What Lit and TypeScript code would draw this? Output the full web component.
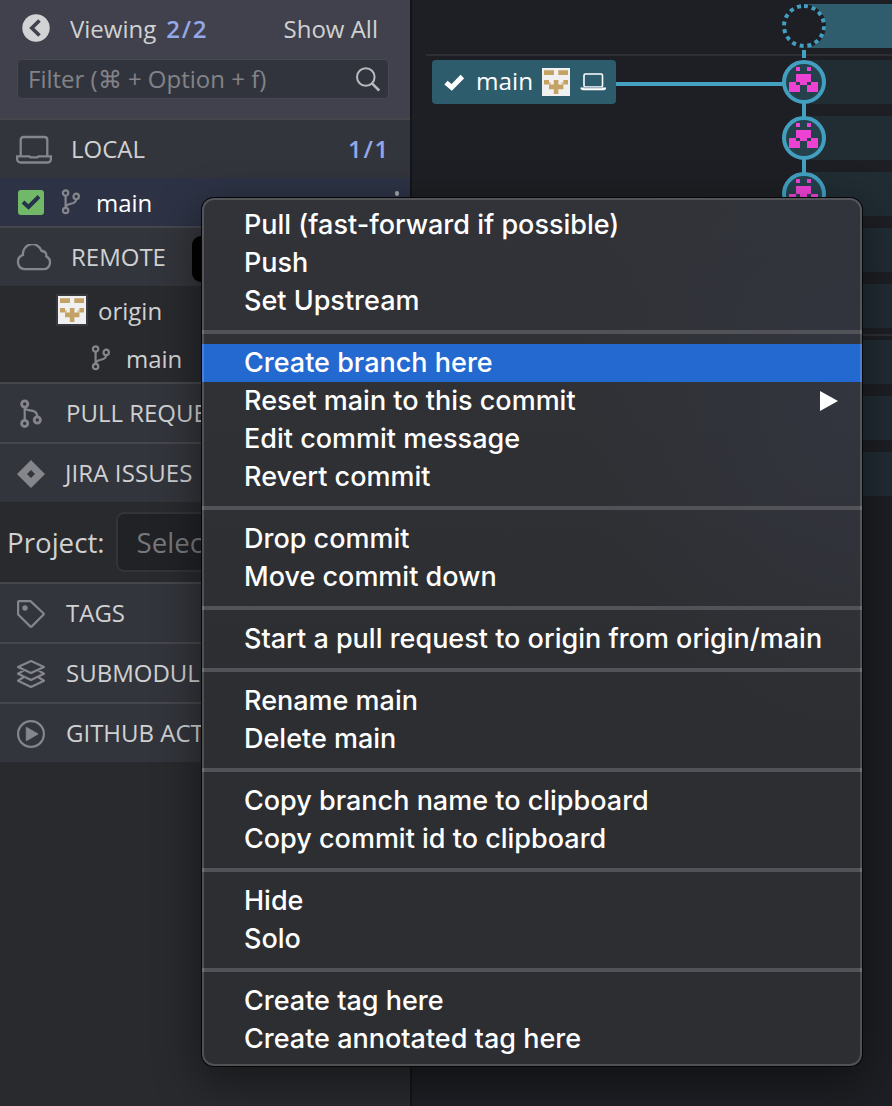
import { LitElement, html, css, svg } from "lit";
import { customElement } from "lit/decorators.js";
import { classMap } from "lit/directives/class-map.js";

const laptop = html`<svg width="36" height="30" viewBox="0 0 36 30" fill="none" stroke="currentColor" stroke-width="2.3">
  <path d="M4.7 21V5Q4.7 2 7.7 2H28.3Q31.3 2 31.3 5V21M1.1 21.4H13.5L14.5 22.4H21.5L22.5 21.4H34.9V23.5Q34.9 27.5 31 27.5H5Q1.1 27.5 1.1 23.5Z"/></svg>`;
const cloud = html`<svg width="36" height="28" viewBox="0 0 36 28" fill="none" stroke="currentColor" stroke-width="2.3">
  <path d="M8 25.2H28.3A6.8 6.8 0 0 0 30.2 12.4A4.7 4.7 0 0 0 25.4 6.6A9.5 9.5 0 0 0 7 10.9A7.4 7.4 0 0 0 8 25.2ZM25 7.2Q27.5 7 29 8.6"/></svg>`;
const branch = html`<svg width="20" height="26" viewBox="0 0 20 26" fill="none" stroke="currentColor" stroke-width="2.2">
  <circle cx="4.6" cy="4" r="2.7"/><circle cx="4.6" cy="21.5" r="2.7"/><circle cx="15.2" cy="7.4" r="2.7"/>
  <path d="M4.6 6.8V18.7M15.2 10.2C15 17 5 12.5 4.6 18.7"/></svg>`;
const pull = html`<svg width="28" height="30" viewBox="0 0 28 30" fill="none" stroke="currentColor" stroke-width="2.2">
  <circle cx="7.7" cy="5" r="3.1" stroke-width="2.8"/><circle cx="7.7" cy="24.4" r="3.1" stroke-width="2.8"/><circle cx="20.3" cy="21" r="3.1" stroke-width="2.8"/>
  <path d="M7.7 8V21.3M8 9C9 13.5 20.3 8.5 20.3 17.9"/></svg>`;
const jira = html`<svg width="28" height="28" viewBox="0 0 28 28" fill="currentColor">
  <path fill-rule="evenodd" d="M14 0L28 14L14 28L0 14ZM14 10L10 14L14 18L18 14Z"/></svg>`;
const tag = html`<svg width="28" height="28" viewBox="0 0 28 28" fill="none" stroke="currentColor" stroke-width="2.2" stroke-linejoin="round">
  <path d="M1.1 2Q1.1 1.1 2 1.1H13.5L26.4 13.2Q27.2 14 26.4 14.8L14.8 26.4Q14 27.2 13.2 26.4L1.1 14.5Z"/><circle cx="8" cy="8" r="2.7" fill="currentColor" stroke="none"/></svg>`;
const layers = html`<svg width="28" height="28" viewBox="0 0 28 28" fill="none" stroke="currentColor" stroke-width="2.2" stroke-linejoin="round">
  <path d="M14 1.1L27 7L14 13L1 7ZM6.5 10.5L1 13.7L14 20L27 13.7L21.5 10.5M6.5 17.2L1 20.7L14 27L27 20.7L21.5 17.2"/></svg>`;
const play = html`<svg width="28" height="28" viewBox="0 0 28 28"><circle cx="14" cy="14" r="12.9" fill="none" stroke="currentColor" stroke-width="2.2"/><path d="M9.3 7.3V20.7L21 14Z" fill="currentColor" stroke="currentColor" stroke-width="1" stroke-linejoin="round"/></svg>`;
const face = html`<svg width="28" height="28" viewBox="0 0 28 28"><path fill="#f0f0f0" d="M0 0H28V28H0Z"/>
  <path fill="#c4a164" d="M2 2.3H12V7H2ZM16.3 2.3H26V7H16.3ZM2 12H7V16.5H2ZM21.4 12H26V16.5H21.4ZM11.8 12H16.4V16.5H21.4V21.2H16.4V26H11.8V21.2H7V16.5H11.8Z"/><path fill="#c4a164" d="M7 14.3H9V16.6H7ZM19.4 14.3H21.4V16.6H19.4Z" opacity=".6"/></svg>`;

const commit = (y: number) => svg`<g transform="translate(804 ${y})">
  <circle r="20" fill="#25414c" stroke="#429fc0" stroke-width="4"/>
  <path fill="#ee42d4" shape-rendering="crispEdges" d="M-8-15H-4V-11H-8ZM3-15H7V-11H3ZM-8-8H7V0H14V10H3V3H-4V10H-15V0H-8Z"/>
  <path fill="#25414c" shape-rendering="crispEdges" d="M-8 0H-4V3H-8ZM3 0H7V3H3Z"/></g>`;

type Item = { label: string; active?: boolean; submenu?: boolean };
const groups: Item[][] = [
  [{ label: "Pull (fast-forward if possible)" }, { label: "Push" }, { label: "Set Upstream" }],
  [{ label: "Create branch here", active: true }, { label: "Reset main to this commit", submenu: true }, { label: "Edit commit message" }, { label: "Revert commit" }],
  [{ label: "Drop commit" }, { label: "Move commit down" }],
  [{ label: "Start a pull request to origin from origin/main" }],
  [{ label: "Rename main" }, { label: "Delete main" }],
  [{ label: "Copy branch name to clipboard" }, { label: "Copy commit id to clipboard" }],
  [{ label: "Hide" }, { label: "Solo" }],
  [{ label: "Create tag here" }, { label: "Create annotated tag here" }],
];

@customElement("context-menu")
export class ContextMenu extends LitElement {
  static styles = css`
    :host { display: block; box-sizing: border-box; width: 660px; height: 868px; padding: 8px 0; border-radius: 12px; position: relative;
      background: radial-gradient(ellipse 280px 360px at 100% 22%, #33353f, #33353f00), linear-gradient(#313338, #2d2e31 55%, #2d2e31);
      box-shadow: 0 0 0 1px #060608, 0 14px 44px 4px rgba(0,0,0,.42);
      font: 500 27px/37px Inter, "Liberation Sans", sans-serif; color: #fff; overflow: hidden; }
    :host::after { content: ""; position: absolute; inset: 0; border: 2px solid rgba(255,255,255,.17); border-radius: 12px; pointer-events: none; }
    .item { display: flex; align-items: center; justify-content: space-between; height: 38px; padding: 0 24px 0 42px; box-sizing: border-box; white-space: nowrap; }
    .text { height: 38px; }
    .active { background: #2469d0; }
    .separator { height: 4px; margin: 10px 0; background: #525358; }
  `;
  render() {
    return html`${groups.map((g, i) => html`${i ? html`<div class="separator"></div>` : ""}
      ${g.map((it) => html`<div class=${classMap({ item: true, active: !!it.active })}><span class="text">${it.label}</span>
        ${it.submenu ? html`<svg width="18" height="20"><path d="M0 0L18 10L0 20Z" fill="#fff"/></svg>` : ""}</div>`)}`)}`;
  }
}

@customElement("commit-graph")
export class CommitGraph extends LitElement {
  static styles = css`
    :host { display: block; position: relative; background: #1e1f24; overflow: hidden; }
    .canvas { display: block; margin-left: -412px; }
    .ref { position: absolute; left: 20px; top: 60px; width: 184px; height: 44px; box-sizing: border-box; display: flex; align-items: center;
      padding: 0 9px 0 12px; background: #2d5d6d; border-radius: 4px; color: #fff; font: 24.3px/42px "Open Sans", "Noto Sans", sans-serif; }
    .check { margin-right: 12px; }
    .name { width: 66px; height: 44px; }
    .machine { margin-left: 10px; }
  `;
  render() {
    return html`<svg class="canvas" width="892" height="1106">
      <path fill="#305d6e" d="M804 4H892V48H804Z"/>
      <path fill="#2f2f33" d="M426 54H892V56H426ZM426 334H892V336H426Z"/>
      ${[60, 116, 172, 228, 284, 340, 396, 452].map((y) => svg`<rect x="804" y=${y} width="88" height="44" fill="#212c33"/>`)}
      <path stroke="#45a1c2" stroke-width="4" d="M616 84H783M804 50V58M804 100V180"/>
      <circle cx="804" cy="26" r="22" fill="#1e1f24"/>
      <circle cx="804" cy="26" r="20" fill="none" stroke="#429fc0" stroke-width="4" stroke-dasharray="4 3.854" transform="rotate(-90 804 26)"/>
      ${[82, 138, 194].map(commit)}
    </svg>
    <div class="ref">
      <svg class="check" width="20" height="17" viewBox="0 0 20 17"><path d="M2 8.6L7.7 13.4L18.4 2.6" fill="none" stroke="#fff" stroke-width="5"/></svg>
      <span class="name">main</span>${face}
      <svg class="machine" width="27" height="19" viewBox="0 0 27 19"><rect x="4" y="1" width="18.5" height="13" rx="1.5" fill="none" stroke="#fff" stroke-width="1.6"/><path d="M.5 14.5H26V15.5Q25.5 17.3 24 17.3H3Q1 17.3 .5 15.5Z" fill="#fff"/><path d="M4 14H22.5V15.4H4Z" fill="#9fb2c4"/></svg>
    </div>`;
  }
}

@customElement("app-root")
export class AppRoot extends LitElement {
  static styles = css`
    :host { display: grid; grid-template-columns: 412px 1fr; height: 1106px; width: 892px; position: relative; overflow: hidden; }
    .sidebar { box-sizing: border-box; border-right: 2px solid #141519; background: #292a2e; color: #d0d1d2; overflow: hidden; white-space: nowrap;
      font: 24px/58px "Open Sans", "Noto Sans", sans-serif; }
    .head { height: 118px; background: #40414c; padding-top: 1px; box-sizing: border-box; }
    .top { display: flex; align-items: center; height: 56px; padding: 0 32px 0 22px; }
    .back { margin-bottom: 2px; }
    .viewing { margin: 0 10px 0 20px; }
    .count { color: #93a8e8; font-weight: 600; letter-spacing: 1.7px; }
    .all { margin-left: auto; }
    .filter { display: flex; align-items: center; justify-content: space-between; box-sizing: border-box; width: 372px; height: 40px; margin: 2px 0 0 17px;
      padding: 0 8px 0 10px; border: 1px solid #464750; border-radius: 5px; background: #32343d; color: #828388; }
    .section { display: flex; align-items: center; height: 58px; border-top: 2px solid #46474c; background: #33353c; padding-right: 20px; }
    .section .icon { width: 62px; box-sizing: border-box; padding: 2px 0 0 17px; }
    .section .label { margin-left: 4px; }
    .section.wide .icon { padding-left: 16px; }
    .section.wide .label { margin-left: 9px; }
    .section.jira .label { margin-left: 3px; letter-spacing: .1px; }
    .icon { display: flex; color: #85868b; }
    .section .count { margin-left: auto; }
    .row { display: flex; align-items: center; height: 48px; }
    .row .label { padding-top: 2px; }
    .current { background: #2d3345; color: #fff; position: relative; padding-left: 18px; }
    .box { display: flex; align-items: center; justify-content: center; width: 26px; height: 25px; border-radius: 3px; background: #71b869; margin-right: 17px; }
    .current .label, .child .label { margin-left: 15px; }
    .more { position: absolute; left: 395px; top: 13px; width: 4px; height: 5px; border-radius: 2px; background: #a3a5ac; }
    .origin { padding-left: 56px; }
    .origin .pic { display: flex; border: 2px solid #38393e; margin-right: 10px; }
    .child { padding-left: 91px; }
    .project { display: flex; align-items: center; height: 80px; padding-left: 7px; font-size: 27.7px; }
    .select { box-sizing: border-box; width: 284px; height: 60px; line-height: 56px; margin-left: 11px; padding-left: 19px; border: 2px solid #333438; border-radius: 8px; background: #212226; color: #77787b; }
    .tooltip { position: absolute; left: 192px; top: 236px; width: 60px; height: 46px; border-radius: 9px; background: #020202; }
    .menu { position: absolute; left: 202px; top: 198px; }
  `;
  render() {
    const section = (icon: unknown, label: string, kind = "", count = "") => html`<div class="section ${kind}">
      <span class="icon">${icon}</span><span class="label">${label}</span>${count ? html`<span class="count">${count}</span>` : ""}</div>`;
    return html`
      <div class="sidebar">
        <div class="head">
          <div class="top">
            <svg class="back" width="28" height="28" viewBox="0 0 28 28"><circle cx="14" cy="14" r="13.7" fill="#d2d3d4"/><path d="M17.5 6.5L9.8 14L17.5 21.5" fill="none" stroke="#40414c" stroke-width="3.6"/></svg>
            <span class="viewing">Viewing</span><span class="count">2/2</span><span class="all">Show All</span>
          </div>
          <div class="filter"><span>Filter (⌘ + Option + f)</span>
            <svg width="24" height="25" viewBox="0 0 24 25" fill="none" stroke="#b9babd" stroke-width="2"><circle cx="9.8" cy="10" r="8.8"/><path d="M16 16.3L23.2 23.5" stroke-width="2.6"/></svg></div>
        </div>
        ${section(laptop, "LOCAL", "wide", "1/1")}
        <div class="row current"><span class="box"><svg width="20" height="16" viewBox="0 0 20 16"><path d="M2 8L7.5 13L18 2.5" fill="none" stroke="#26314a" stroke-width="4"/></svg></span>
          <span class="icon">${branch}</span><span class="label">main</span><i class="more"></i></div>
        ${section(cloud, "REMOTE", "wide")}
        <div class="row origin"><span class="pic">${face}</span><span class="label">origin</span></div>
        <div class="row child"><span class="icon">${branch}</span><span class="label">main</span></div>
        ${section(pull, "PULL REQUESTS")}
        ${section(jira, "JIRA ISSUES", "jira")}
        <div class="project"><span>Project:</span><span class="select">Select</span></div>
        ${section(tag, "TAGS")}
        ${section(layers, "SUBMODULES")}
        ${section(play, "GITHUB ACTIONS")}
      </div>
      <commit-graph></commit-graph>
      <div class="tooltip"></div>
      <context-menu class="menu"></context-menu>`;
  }
}
